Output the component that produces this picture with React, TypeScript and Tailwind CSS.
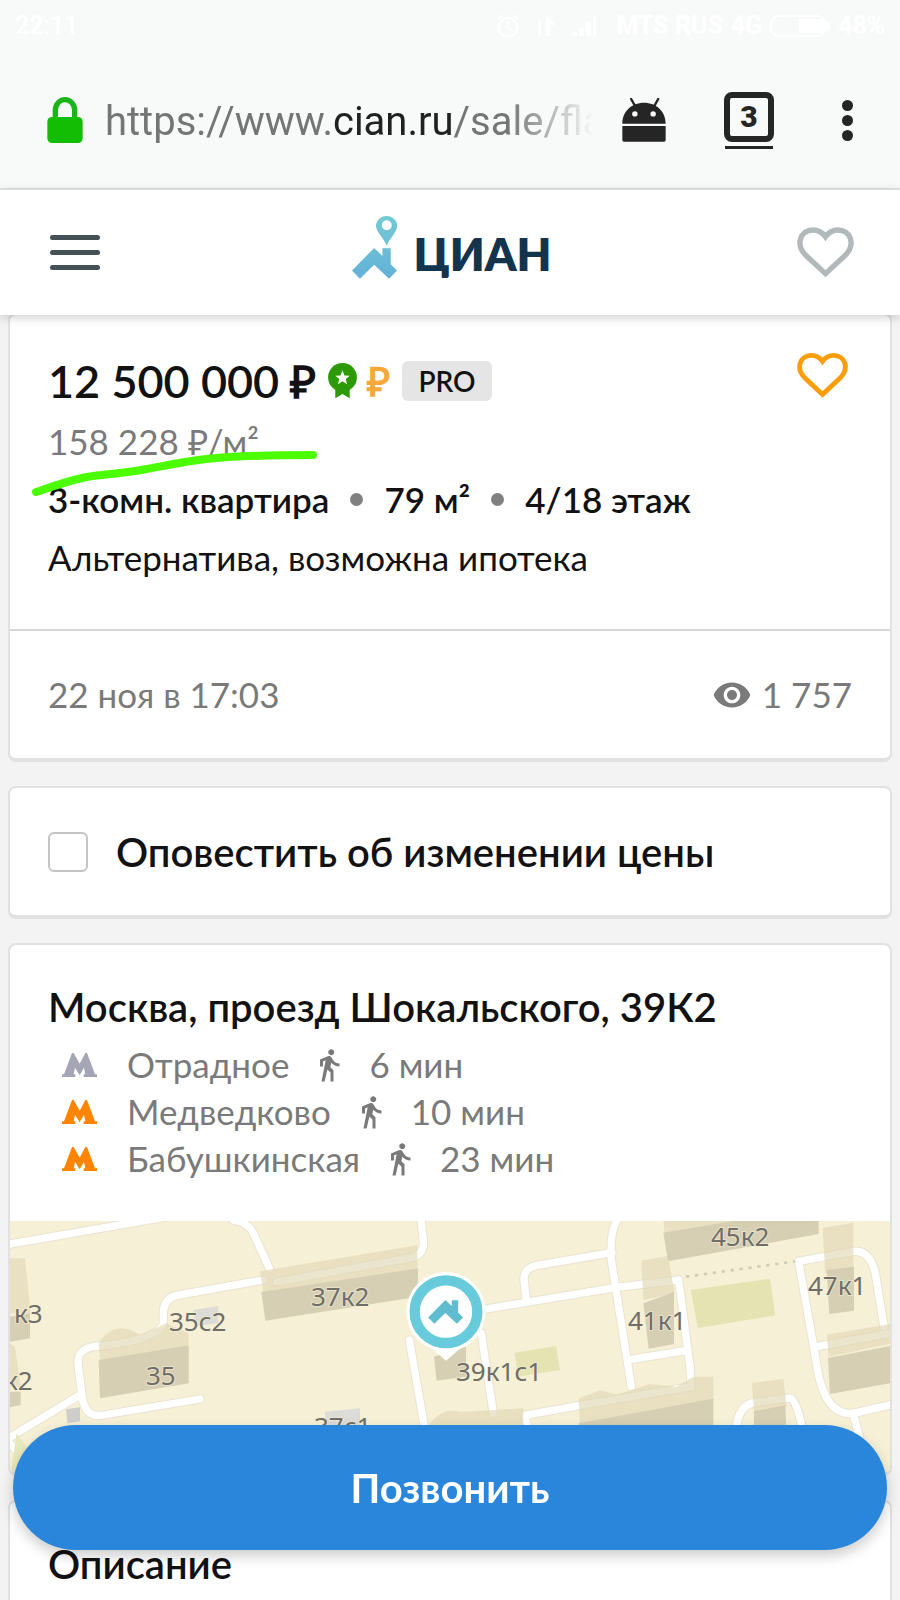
import type { ReactNode } from "react";
import { MdAlarm, MdDirectionsWalk, MdVisibility } from "react-icons/md";

type Station = { name: string; minutes: number; color: string };

const stations: Station[] = [
  { name: "Отрадное", minutes: 6, color: "#a4a6b6" },
  { name: "Медведково", minutes: 10, color: "#ff8500" },
  { name: "Бабушкинская", minutes: 23, color: "#ff8500" },
];

const houseLabels = [
  { text: "к3", x: 4, y: 102 },
  { text: "к2", x: -6, y: 169 },
  { text: "35", x: 136, y: 164 },
  { text: "35с2", x: 159, y: 110 },
  { text: "37к2", x: 301, y: 85 },
  { text: "37с1", x: 304, y: 215 },
  { text: "39к1с1", x: 446, y: 160 },
  { text: "41к1", x: 618, y: 109 },
  { text: "45к2", x: 701, y: 25 },
  { text: "47к1", x: 798, y: 74 },
];

const roads = [
  "M20 134 L400 68 L560 40",
  "M700 60 Q745 66 760 100 L808 205",
  "M1262 50 L1270 120 Q1274 160 1240 172 L830 246",
  "M790 240 L530 286 Q490 296 490 340 L490 372 Q470 420 300 438",
  "M300 438 Q232 440 234 490 L246 590 Q256 656 310 645 L600 597",
  "M240 585 L20 718",
  "M30 730 L80 790",
  "M1228 420 L1275 690",
  "M1440 330 L1850 262 L2036 240 L2070 500",
  "M1578 296 L1572 240 Q1570 206 1610 196 L1836 158",
  "M1860 50 Q1828 80 1834 180 L1894 560",
  "M1894 478 L2056 452",
  "M1444 400 L1480 640",
  "M2070 500 L2074 560 L1740 616 L1574 646 L1586 690",
  "M2396 184 L2560 154 Q2610 150 2626 220 L2652 380",
  "M2396 184 L2448 480 Q2470 650 2560 640 L2690 610",
  "M2450 440 L2690 396",
  "M2560 640 L2580 720",
  "M2208 690 Q2214 612 2270 606 L2370 594 Q2390 600 2408 690",
];

function Card({ className = "border-2 border-b-4 rounded-lg", children }: { className?: string; children: ReactNode }) {
  return <section className={`relative overflow-hidden border-[#e1e1e1] bg-white ${className}`}>{children}</section>;
}

function Heart({ className }: { className: string }) {
  return (
    <svg viewBox="0 0 170 150" className={className} fill="none" stroke="currentColor" strokeWidth="16">
      <path d="M85 138 L30 87 C-8 52 10 8 48 8 C64 8 77 17 85 28 C93 17 106 8 122 8 C160 8 178 52 140 87 Z" />
    </svg>
  );
}

function MetroIcon({ color }: { color: string }) {
  return (
    <svg viewBox="0 0 105 72" className="h-6 w-[35px]" fill={color}>
      <path d="M0 72V64H6L30 0H35L53 32L70 0H75L99 64H105V72H65V64H70L66 44L53 67L39 44L35 64H40V72Z" />
    </svg>
  );
}

function StatusBar() {
  return (
    <div className="flex h-[52px] items-center justify-between px-[15px] font-['Roboto',sans-serif] text-[25px] font-bold text-white">
      <span className="font-medium">22:11</span>
      <div className="flex items-center gap-2">
        <MdAlarm className="size-7" />
        <svg viewBox="0 0 18 20" className="mx-2 h-5 w-[18px]" fill="currentColor">
          <path d="M0 4H3V20H0ZM8 20V0L18 9H12V20Z" />
        </svg>
        <svg viewBox="0 0 28 20" className="mr-2 h-5 w-7" fill="currentColor">
          <path d="M0 16h5v4H0zM7 12h5v8H7zM14 6h5v14h-5zM21 0h3v20h-3z" />
        </svg>
        <span>MTS RUS</span>
        <span>4G</span>
        <svg viewBox="0 0 60 22" className="h-[22px] w-[60px]" fill="none" stroke="currentColor" strokeWidth="2">
          <rect x="1" y="1" width="54" height="20" rx="8" />
          <path d="M30 5H54V17H30Z" fill="currentColor" />
          <path d="M58 7V15" strokeWidth="3" />
        </svg>
        <span className="font-medium">48%</span>
      </div>
    </div>
  );
}

function AddressBar() {
  return (
    <div className="flex h-[136px] items-center px-[47px] font-['Roboto',sans-serif] text-[#252525]">
      <svg viewBox="0 0 106 138" className="h-[46px] w-9 shrink-0">
        <path d="M24 70V40A29 32 0 0 1 82 40V70" fill="none" stroke="#1bb51b" strokeWidth="16" />
        <rect y="60" width="106" height="78" rx="14" fill="#12bd04" />
      </svg>
      <button className="ml-[22px] min-w-0 flex-1 overflow-hidden pt-1 text-left text-[40px] leading-[48px] whitespace-nowrap text-[#757575] [mask-image:linear-gradient(to_right,black_calc(100%-90px),transparent_calc(100%-4px))]">
        https://www.<span className="text-[#212121]">cian.ru</span>/sale/fla
      </button>
      <button aria-label="Приложение" className="ml-6 shrink-0">
        <svg viewBox="0 0 130 130" className="size-11" fill="currentColor">
          <path d="M1 76C1 40 28 14 65 14S129 40 129 76ZM1 83H129V124Q129 129 124 129H6Q1 129 1 124Z" />
          <path d="M27 3L40 26M107 3L94 26" stroke="currentColor" strokeWidth="7" strokeLinecap="round" />
          <circle cx="38" cy="47" r="8" fill="#f8faf9" />
          <circle cx="92" cy="47" r="8" fill="#f8faf9" />
        </svg>
      </button>
      <button aria-label="Вкладки" className="ml-[58px] flex shrink-0 flex-col items-center gap-1">
        <span className="flex h-[50px] w-[50px] items-center justify-center rounded-lg border-[6px] border-[#252525] text-3xl font-black">
          3
        </span>
        <span className="h-[3px] w-12 bg-[#252525]" />
      </button>
      <button aria-label="Меню браузера" className="ml-[68px] flex shrink-0 flex-col gap-1">
        {[0, 1, 2].map((i) => (
          <span key={i} className="size-[11px] rounded-full bg-[#252525]" />
        ))}
      </button>
    </div>
  );
}

function SiteHeader() {
  return (
    <header className="relative z-10 grid h-[125px] grid-cols-[1fr_auto_1fr] items-center bg-white pr-[46px] pl-[50px] shadow-[0_2px_10px_rgba(0,0,0,0.2)]">
      <button aria-label="Меню" className="flex w-[50px] flex-col gap-[10px]">
        {[0, 1, 2].map((i) => (
          <span key={i} className="h-[5px] rounded-full bg-[#465057]" />
        ))}
      </button>
      <a href="#" className="flex items-end gap-4 pb-3">
        <svg viewBox="1050 642 136 195" className="h-[65px] w-[45px]">
          <defs>
            <linearGradient id="logo" x1="0" y1="642" x2="0" y2="837" gradientUnits="userSpaceOnUse">
              <stop offset="0" stopColor="#75cbd4" />
              <stop offset="1" stopColor="#62b1d8" />
            </linearGradient>
          </defs>
          <path
            fill="url(#logo)"
            fillRule="evenodd"
            d="M1155 737C1146 714 1122 696 1122 674A33 32 0 0 1 1187 674C1187 696 1163 714 1155 737ZM1155 660A15 15 0 1 0 1155 690A15 15 0 1 0 1155 660Z"
          />
          <path fill="url(#logo)" d="M1050 812L1117 744L1142 768V745H1167V793L1186 812L1162 837L1117 795L1074 837Z" />
        </svg>
        <span className="text-[45px] leading-[50px] font-extrabold text-[#14334c]">ЦИАН</span>
      </a>
      <button aria-label="Избранное" className="justify-self-end text-[#b2b9bb]">
        <Heart className="h-[51px] w-[57px]" />
      </button>
    </header>
  );
}

function PriceCard() {
  return (
    <Card className="-mt-[2px] rounded-lg border-2 border-b-4">
      <div className="px-[38px] pt-[42px] pb-[50px]">
        <div className="flex h-12 items-center">
          <h1 className="text-[45px] leading-[48px] font-semibold">12 500 000 ₽</h1>
          <svg viewBox="0 0 88 110" className="ml-3 h-9 w-[29px]">
            <path d="M22 70H66V108L44 95L22 108Z" fill="#2b9a06" />
            <circle cx="44" cy="44" r="44" fill="#2b9a06" />
            <path d="M44 22L50 38L66 39L54 49L58 65L44 56L30 65L34 49L22 39L38 38Z" fill="#fff" />
          </svg>
          <span className="ml-[10px] text-[40px] leading-[48px] font-bold text-[#f5a938]">₽</span>
          <span className="ml-3 rounded-md bg-[#e5e5e5] px-4 text-[28px] leading-[40px] font-semibold">PRO</span>
          <button aria-label="В избранное" className="ml-auto px-1 pb-3 text-[#fa9d08]">
            <Heart className="h-[45px] w-[51px]" />
          </button>
        </div>
        <p className="mt-[14px] text-[35px] leading-[44px] text-[#7a7a7a]">158 228 ₽/м²</p>
        <h2 className="mt-[14px] flex items-center text-[35px] leading-[44px] font-semibold">
          3-комн. квартира
          <span className="mx-[21px] size-[13px] rounded-full bg-[#808080]" />
          79 м²
          <span className="mx-[21px] size-[13px] rounded-full bg-[#808080]" />
          4/18 этаж
        </h2>
        <p className="mt-[14px] text-[35px] leading-[44px]">Альтернатива, возможна ипотека</p>
      </div>
      <div className="flex h-[129px] items-center justify-between border-t-2 border-[#d6d6d6] px-[38px] text-[35px] text-[#7a7a7a]">
        <time>22 ноя в 17:03</time>
        <span className="flex items-center gap-[10px]">
          <MdVisibility className="size-10" />1 757
        </span>
      </div>
      {/* Marker stroke under the price per metre */}
      <svg viewBox="0 0 290 50" className="pointer-events-none absolute top-[131px] left-[18px] h-[50px] w-[290px]" fill="none">
        <path
          d="M8 46C20 42 36 36 56 31.500C74 28 92 28 116 23.500C136 20 158 15 178 13C206 10 240 9 285 9"
          stroke="#4cff00"
          strokeWidth="8"
          strokeLinecap="round"
        />
      </svg>
    </Card>
  );
}

function Building({ roof, wall }: { roof: string; wall: string }) {
  return (
    <>
      <path d={roof} fill="#e0d7b3" fillOpacity="0.65" />
      <path d={wall} fill="#d5ccb2" fillOpacity="0.95" />
    </>
  );
}

function MapView() {
  return (
    <svg viewBox="0 0 880 251" preserveAspectRatio="xMidYMid slice" className="block h-[251px] w-full bg-[#f6f0d6]">
      <g transform="translate(-10 -21) scale(0.33333)">
        <path d="M2072 270L2310 236L2326 346L2094 384Z" fill="#e6e3b3" />
        <path d="M1544 458L1668 438L1680 510L1554 530Z" fill="#e6e3b3" />
        <path d="M580 330L655 318V370L585 378Z" fill="#dddbd6" />
        <path d="M975 635L1080 625V680H975Z" fill="#dddbd6" />
        <path d="M198 628L240 622V664L202 670Z" fill="#cfcdca" />
        <g fill="none" strokeLinecap="round" strokeLinejoin="round">
          {roads.map((d) => (
            <path key={d} d={d} stroke="#e9e3d0" strokeWidth="28" />
          ))}
          {roads.map((d) => (
            <path key={d} d={d} stroke="#fff" strokeWidth="22" />
          ))}
        </g>
        <path d="M2058 230L2386 184" stroke="#d3ceb2" strokeWidth="8" strokeDasharray="10 17" />
        <Building roof="M780 214L1252 136V205L790 276Z" wall="M784 276L1254 205V290L796 362Z" />
        <Building roof="M296 430Q345 355 420 405L500 370L565 400V436L300 480Z" wall="M296 480L566 436V550L300 595Z" />
        <Building roof="M30 175H75L92 340H30Z" wall="M30 350L90 340V415L30 425Z" />
        <Building roof="M30 430L45 440L62 560H30Z" wall="M30 575H62V615L30 622Z" />
        <Building roof="M1990 63H2450L2440 70L1994 98Z" wall="M1990 98L2200 63H2456V102L2004 184Z" />
        <Building roof="M1924 182L2004 168L2024 280L1930 300Z" wall="M1930 310L2022 276V432L1946 446Z" />
        <Building roof="M2468 84L2560 68V210L2476 220Z" wall="M2480 210L2562 200V332L2488 342Z" />
        <Building roof="M2480 404L2680 370V430L2486 470Z" wall="M2484 474L2680 436V548L2490 582Z" />
        <Building roof="M1736 596L1800 570L1850 584L1950 552L2030 560L2080 530L2140 530V600L1740 670Z" wall="M1736 670L2140 596V720H1736Z" />
        <Building roof="M2256 550L2350 536L2360 620L2262 640Z" wall="M2262 634L2356 616L2360 720H2262Z" />
        <Building roof="M1290 670Q1330 620 1380 636L1570 625V700H1290Z" wall="M1302 470L1398 440V530L1310 542Z" />
        <path d="M50 700L100 770L130 830H30Z" fill="#e8e9bd" />
        {/* Location pin */}
        <path d="M1284 436L1338 482L1392 436Z" fill="#fff" />
        <circle cx="1338" cy="335" r="119" fill="#fff" />
        <circle cx="1338" cy="335" r="94" fill="none" stroke="#68cbdc" strokeWidth="31" />
        <path
          d="M1050 812L1117 744L1142 768V745H1167V793L1186 812L1162 837L1117 795L1074 837Z"
          transform="translate(476 -273) scale(0.77)"
          fill="#60bdd0"
        />
      </g>
      <g
        fill="#6f6e68"
        stroke="#f6f0d6"
        strokeWidth="2"
        strokeOpacity="0.6"
        paintOrder="stroke"
        className="font-['Noto_Sans',sans-serif] text-[26px]"
      >
        {houseLabels.map((label) => (
          <text key={label.text} x={label.x} y={label.y}>
            {label.text}
          </text>
        ))}
      </g>
    </svg>
  );
}

export default function App() {
  return (
    <div className="flex min-h-screen flex-col bg-[#f3f3f3] font-['Lato',sans-serif] text-[#121212]">
      <div className="border-b-2 border-[#e2e6e5] bg-[#f8faf9]">
        <StatusBar />
        <AddressBar />
      </div>
      <SiteHeader />

      <main className="flex flex-1 flex-col gap-6 px-2">
        <PriceCard />

        <Card>
          <label className="flex h-[127px] items-center gap-7 px-[38px] text-[40px] leading-[48px] font-semibold">
            <input type="checkbox" className="size-10 shrink-0 appearance-none rounded-md border-2 border-[#c4c4c4] bg-white" />
            Оповестить об изменении цены
          </label>
        </Card>

        <Card>
          <h2 className="px-[38px] pt-[38px] text-[40px] leading-[48px] font-semibold">Москва, проезд Шокальского, 39К2</h2>
          <ul className="mt-[10px] mb-[39px] pl-[52px] text-[35px] leading-[47px] text-[#7a7a7a]">
            {stations.map((s) => (
              <li key={s.name} className="flex items-center">
                <MetroIcon color={s.color} />
                <a href="#" className="ml-[30px]">
                  {s.name}
                </a>
                <MdDirectionsWalk className="mx-[22px] size-9" />
                {s.minutes} мин
              </li>
            ))}
          </ul>
          <MapView />
        </Card>

        <Card className="flex-1 rounded-t-lg border-2 border-b-0">
          <h2 className="px-[38px] pt-[38px] text-[40px] leading-[48px] font-semibold">Описание</h2>
        </Card>
      </main>

      <button className="fixed inset-x-[13px] bottom-[50px] z-20 h-[125px] rounded-full bg-[#2a86da] text-[40px] font-bold text-white shadow-[0_6px_14px_rgba(0,0,0,0.2)]">
        Позвонить
      </button>
    </div>
  );
}
